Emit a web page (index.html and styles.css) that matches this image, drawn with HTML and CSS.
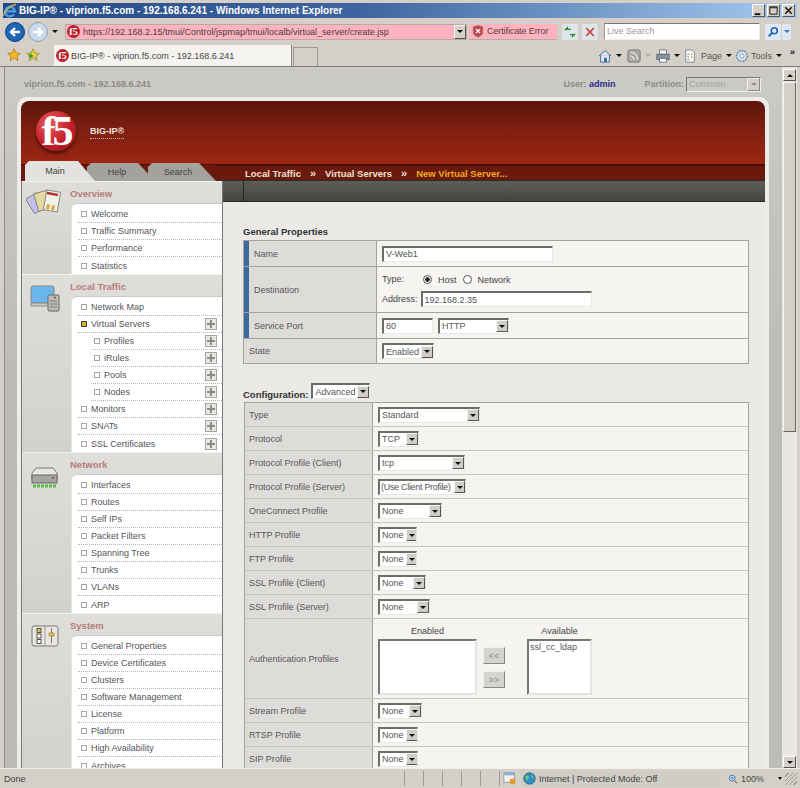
FILE: index.html
```html
<!DOCTYPE html>
<html>
  <head>
    <meta charset="utf-8" />
    <title>BIG-IP - viprion.f5.com</title>
    <link rel="stylesheet" href="styles.css">
  </head>
  <body>
    <div class="titlebar">
      <svg class="ie-logo" viewBox="0 0 16 16"><path d="M4 9h9.500A5.500 5.500 0 1 0 12.500 12.500" fill="none" stroke="#4f9fe8" stroke-width="2.600"/><path d="M1 14C0 10 8 2 15 1" fill="none" stroke="#e8c43a" stroke-width="1.200"/></svg>
      <span class="title-text">BIG-IP® - viprion.f5.com - 192.168.6.241 - Windows Internet Explorer</span>
      <div class="win-btns">
        <span class="win-btn"><svg viewBox="0 0 12 12"><rect x="2" y="9" width="6" height="2" fill="#111"/></svg></span>
        <span class="win-btn"><svg viewBox="0 0 12 12"><path d="M2 2h8v8H2zM2 3h8" fill="none" stroke="#111"/></svg></span>
        <span class="win-btn"><svg viewBox="0 0 12 12"><path d="M2.5 2.5l7 7M9.5 2.5l-7 7" stroke="#111" stroke-width="1.6"/></svg></span>
      </div>
    </div>

    <div class="addressbar">
      <svg class="nav-btn back" viewBox="0 0 20 20"><circle cx="10" cy="10" r="9.5" fill="#1f66b8" stroke="#0d3f7e"/><path d="M15 10H7M10 6l-4 4 4 4" fill="none" stroke="#fff" stroke-width="2.4"/></svg>
      <svg class="nav-btn" viewBox="0 0 20 20"><circle cx="10" cy="10" r="9.5" fill="#c9d9e8" stroke="#8ea3b8"/><path d="M5 10h8M10 6l4 4-4 4" fill="none" stroke="#fff" stroke-width="2.4"/></svg>
      <span class="mini-arrow nav-drop"></span>
      <div class="url-field">
        <span class="fav">f5</span>
        <span class="url-text">https://192.168.2.15/tmui/Control/jspmap/tmui/localb/virtual_server/create.jsp</span>
        <span class="drop-btn"><span class="mini-arrow"></span></span>
      </div>
      <div class="cert-error">
        <svg class="cert-icon" viewBox="0 0 14 16"><path d="M1 2l6-1.5 6 1.5v7c0 3-3 5-6 6-3-1-6-3-6-6z" fill="#c9414b" stroke="#8c8c8c"/><path d="M4.5 5l5 5M9.5 5l-5 5" stroke="#fff" stroke-width="1.6"/></svg>
        <span>Certificate Error</span>
      </div>
      <span class="tool-square"><svg viewBox="0 0 14 14"><path d="M1 5l3-3v2h4M13 9l-3 3v-2H7" fill="none" stroke="#1e8a2e" stroke-width="1.5"/></svg></span>
      <span class="tool-square stop"><svg viewBox="0 0 14 14"><path d="M2.5 2.5l9 9M11.5 2.5l-9 9" stroke="#c8463c" stroke-width="1.8"/></svg></span>
      <div class="search-field">Live Search</div>
      <span class="tool-square search-go"><svg viewBox="0 0 14 14"><circle cx="8.5" cy="5.5" r="3.5" fill="none" stroke="#2160b5" stroke-width="1.8"/><path d="M6 8l-4 4" stroke="#2160b5" stroke-width="2.2"/></svg></span>
      <span class="tool-square search-drop"><span class="mini-arrow blue"></span></span>
    </div>

    <div class="tabsbar">
      <svg class="fav-star" viewBox="0 0 16 16"><path d="M8 1l2.2 4.6 5 .6-3.7 3.4 1 5L8 11.2 3.5 14.600l1-5L.8 6.200l5-.6z" fill="#f2b92c" stroke="#b97e12"/></svg>
      <svg class="fav-star second" viewBox="0 0 16 16"><path d="M8 1l2.2 4.6 5 .6-3.7 3.4 1 5L8 11.2 3.5 14.600l1-5L.8 6.200l5-.6z" fill="#e7cf45" stroke="#a58d20"/><path d="M3 9h5M5.5 6.5v5" stroke="#2f9e34" stroke-width="2"/></svg>
      <div class="browser-tab">
        <span class="fav">f5</span>
        <span>BIG-IP® - viprion.f5.com - 192.168.6.241</span>
      </div>
      <div class="new-tab"></div>
      <div class="cmd-bar">
        <svg class="cmd-icon" viewBox="0 0 16 16"><path d="M1 8l7-6 7 6M3 7v8h10V7" fill="#dfe8f2" stroke="#3a5f96"/><rect x="7" y="10" width="3" height="5" fill="#2b63ad"/></svg>
        <span class="mini-arrow cmd-drop"></span>
        <svg class="cmd-icon rss" viewBox="0 0 16 16"><rect x="1" y="1" width="14" height="14" rx="2" fill="#a8a8a4" stroke="#777"/><path d="M4 12h1M4 8c2 0 4 2 4 4M4 4c5 0 8 3 8 8" fill="none" stroke="#eee" stroke-width="1.4"/></svg>
        <span class="mini-arrow cmd-drop faded"></span>
        <svg class="cmd-icon print" viewBox="0 0 16 16"><rect x="4" y="1" width="8" height="5" fill="#f2f2f2" stroke="#6c7480"/><rect x="1" y="6" width="14" height="6" fill="#8a93a0" stroke="#5a626e"/><rect x="4" y="11" width="8" height="4" fill="#fff" stroke="#6c7480"/></svg>
        <span class="mini-arrow cmd-drop tight"></span>
        <svg class="cmd-icon page-icon" viewBox="0 0 16 16"><path d="M3 1h7l3 3v11H3z" fill="#f5f5f0" stroke="#7c8490"/><path d="M5 6h2M5 9h2M5 12h2" stroke="#5f8f4e"/><path d="M9 6h2M9 9h2" stroke="#c58b36"/></svg>
        <span class="cmd-label">Page</span>
        <span class="mini-arrow cmd-drop tight"></span>
        <svg class="cmd-icon gear" viewBox="0 0 16 16"><circle cx="8" cy="8" r="6" fill="#dce6ef" stroke="#6b8fb5" stroke-width="2" stroke-dasharray="2 1"/><circle cx="8" cy="8" r="2.5" fill="#f2f2ee" stroke="#7f97b0"/></svg>
        <span class="cmd-label">Tools</span>
        <span class="mini-arrow cmd-drop"></span>
        <span class="chevrons">»</span>
      </div>
    </div>

    <div class="viewport">
      <div class="page">
        <div class="page-top">
          <span class="hostname">viprion.f5.com - 192.168.6.241</span>
          <span class="user-label">User: <b>admin</b></span>
          <span class="partition-label">Partition:</span>
          <span class="partition-select">Common<span class="drop-btn"><span class="mini-arrow grey"></span></span></span>
        </div>

        <div class="frame">
          <div class="banner">
            <div class="logo"><span>f5</span></div>
            <span class="product">BIG-IP®</span>
          </div>
          <div class="tabstrip">
            <span class="tab active">Main</span>
            <span class="tab help">Help</span>
            <span class="tab search">Search</span>
            <div class="crumbs">
              <span>Local Traffic</span><i>»</i><span>Virtual Servers</span><i>»</i><span class="current">New Virtual Server...</span>
            </div>
          </div>
          <div class="columns">
            <nav class="sidebar">
              <section class="nav-section">
                <svg class="section-icon" viewBox="0 0 38 28"><g stroke="#777" stroke-width=".8"><rect x="3" y="6" width="13" height="17" fill="#c4c0ea" transform="rotate(-32 9 14)"/><rect x="10" y="3" width="13" height="18" fill="#e6d9a0" transform="rotate(-16 16 12)"/><rect x="19" y="2" width="14" height="20" fill="#f4f2e8" transform="rotate(10 26 12)"/></g><path d="M21 4l11 2" stroke="#b5352d" stroke-width="2.4"/><path d="M21 15l3 .5-1 5-3-.5zM26 16l3 .5-1 5-3-.5z" fill="#d8a93c"/></svg>
                <h3>Overview</h3>
                <ul class="nav-list">
                  <li><span class="box"></span>Welcome</li>
                  <li><span class="box"></span>Traffic Summary</li>
                  <li><span class="box"></span>Performance</li>
                  <li><span class="box"></span>Statistics</li>
                </ul>
              </section>
              <section class="nav-section">
                <svg class="section-icon" viewBox="0 0 38 28"><rect x="2" y="1" width="23" height="17" rx="2" fill="#6bb6ec" stroke="#888"/><path d="M2 18h23v3H2z" fill="#c9c9c9" stroke="#888"/><rect x="19" y="10" width="11" height="16" rx="1" fill="#bdbdb8" stroke="#666"/><path d="M21 16h7M21 19h7M21 22h7" stroke="#777"/><circle cx="26" cy="12.5" r="1" fill="#b5352d"/></svg>
                <h3>Local Traffic</h3>
                <ul class="nav-list">
                  <li><span class="box"></span>Network Map</li>
                  <li class="on"><span class="box"></span>Virtual Servers<span class="plus"></span></li>
                  <li class="sub"><span class="box"></span>Profiles<span class="plus"></span></li>
                  <li class="sub"><span class="box"></span>iRules<span class="plus"></span></li>
                  <li class="sub"><span class="box"></span>Pools<span class="plus"></span></li>
                  <li class="sub"><span class="box"></span>Nodes<span class="plus"></span></li>
                  <li><span class="box"></span>Monitors<span class="plus"></span></li>
                  <li><span class="box"></span>SNATs<span class="plus"></span></li>
                  <li><span class="box"></span>SSL Certificates<span class="plus"></span></li>
                </ul>
              </section>
              <section class="nav-section">
                <svg class="section-icon" viewBox="0 0 38 28"><path d="M5 7l4-5h17l4 5v7H5z" fill="#e6e6e4" stroke="#777"/><rect x="5" y="9" width="25" height="8" fill="#a5a5a2" stroke="#666"/><circle cx="26" cy="12" r="1" fill="#b5352d"/><path d="M6 20h24" stroke="#5dbb47" stroke-width="3" stroke-dasharray="3 1"/></svg>
                <h3>Network</h3>
                <ul class="nav-list">
                  <li><span class="box"></span>Interfaces</li>
                  <li><span class="box"></span>Routes</li>
                  <li><span class="box"></span>Self IPs</li>
                  <li><span class="box"></span>Packet Filters</li>
                  <li><span class="box"></span>Spanning Tree</li>
                  <li><span class="box"></span>Trunks</li>
                  <li><span class="box"></span>VLANs</li>
                  <li><span class="box"></span>ARP</li>
                </ul>
              </section>
              <section class="nav-section">
                <svg class="section-icon" viewBox="0 0 38 28"><rect x="5" y="2" width="26" height="20" rx="2" fill="#e8e6df" stroke="#777"/><path d="M18 2v20" stroke="#999"/><rect x="10" y="4.5" width="4" height="4" fill="#e2c548" stroke="#555"/><rect x="10" y="10" width="4" height="4" fill="#fff" stroke="#555"/><rect x="10" y="15.5" width="4" height="4" fill="#fff" stroke="#555"/><path d="M24.5 4v15" stroke="#777"/><rect x="22" y="9" width="5" height="3" fill="#e2c548" stroke="#8a7a20" stroke-width=".6"/></svg>
                <h3>System</h3>
                <ul class="nav-list">
                  <li><span class="box"></span>General Properties</li>
                  <li><span class="box"></span>Device Certificates</li>
                  <li><span class="box"></span>Clusters</li>
                  <li><span class="box"></span>Software Management</li>
                  <li><span class="box"></span>License</li>
                  <li><span class="box"></span>Platform</li>
                  <li><span class="box"></span>High Availability</li>
                  <li><span class="box"></span>Archives</li>
                </ul>
              </section>
            </nav>

            <main class="content">
              <div class="toolstrip"><span class="toolstrip-cell"></span></div>
              <div class="form-area">
                <h4 class="form-title">General Properties</h4>
                <div class="form-table general">
                  <div class="row req h26">
                    <div class="label">Name</div>
                    <div class="value"><span class="input w-name">V-Web1</span></div>
                  </div>
                  <div class="row req h46">
                    <div class="label">Destination</div>
                    <div class="value stack">
                      <div class="type-line">
                        <span class="type-word">Type:</span>
                        <span class="radio checked"></span><span class="radio-text">Host</span>
                        <span class="radio"></span><span class="radio-text">Network</span>
                      </div>
                      <div class="address-line">
                        <span>Address:</span><span class="input w-address">192.168.2.35</span>
                      </div>
                    </div>
                  </div>
                  <div class="row req h26">
                    <div class="label">Service Port</div>
                    <div class="value">
                      <span class="input w-port">80</span>
                      <span class="select w-http">HTTP<span class="drop-btn"><span class="mini-arrow"></span></span></span>
                    </div>
                  </div>
                  <div class="row h25">
                    <div class="label">State</div>
                    <div class="value"><span class="select w-state">Enabled<span class="drop-btn"><span class="mini-arrow"></span></span></span></div>
                  </div>
                </div>

                <div class="config-head">
                  <h4 class="form-title">Configuration:</h4>
                  <span class="select w-advanced">Advanced<span class="drop-btn"><span class="mini-arrow"></span></span></span>
                </div>
                <div class="form-table config">
                  <div class="row"><div class="label">Type</div><div class="value"><span class="select w-type">Standard<span class="drop-btn"><span class="mini-arrow"></span></span></span></div></div>
                  <div class="row"><div class="label">Protocol</div><div class="value"><span class="select w-tcp">TCP<span class="drop-btn"><span class="mini-arrow"></span></span></span></div></div>
                  <div class="row"><div class="label">Protocol Profile (Client)</div><div class="value"><span class="select w-client">tcp<span class="drop-btn"><span class="mini-arrow"></span></span></span></div></div>
                  <div class="row"><div class="label">Protocol Profile (Server)</div><div class="value"><span class="select w-server">(Use Client Profile)<span class="drop-btn"><span class="mini-arrow"></span></span></span></div></div>
                  <div class="row"><div class="label">OneConnect Profile</div><div class="value"><span class="select w-one">None<span class="drop-btn"><span class="mini-arrow"></span></span></span></div></div>
                  <div class="row"><div class="label">HTTP Profile</div><div class="value"><span class="select w-39">None<span class="drop-btn"><span class="mini-arrow"></span></span></span></div></div>
                  <div class="row"><div class="label">FTP Profile</div><div class="value"><span class="select w-39">None<span class="drop-btn"><span class="mini-arrow"></span></span></span></div></div>
                  <div class="row"><div class="label">SSL Profile (Client)</div><div class="value"><span class="select w-48">None<span class="drop-btn"><span class="mini-arrow"></span></span></span></div></div>
                  <div class="row"><div class="label">SSL Profile (Server)</div><div class="value"><span class="select w-52">None<span class="drop-btn"><span class="mini-arrow"></span></span></span></div></div>
                  <div class="row auth">
                    <div class="label">Authentication Profiles</div>
                    <div class="value picker">
                      <div class="pick-col">
                        <span class="pick-title">Enabled</span>
                        <div class="listbox w-enabled"></div>
                      </div>
                      <div class="pick-btns"><span class="move">&lt;&lt;</span><span class="move">&gt;&gt;</span></div>
                      <div class="pick-col">
                        <span class="pick-title">Available</span>
                        <div class="listbox w-available">ssl_cc_ldap</div>
                      </div>
                    </div>
                  </div>
                  <div class="row"><div class="label">Stream Profile</div><div class="value"><span class="select w-44">None<span class="drop-btn"><span class="mini-arrow"></span></span></span></div></div>
                  <div class="row"><div class="label">RTSP Profile</div><div class="value"><span class="select w-40">None<span class="drop-btn"><span class="mini-arrow"></span></span></span></div></div>
                  <div class="row"><div class="label">SIP Profile</div><div class="value"><span class="select w-40">None<span class="drop-btn"><span class="mini-arrow"></span></span></span></div></div>
                </div>
              </div>
            </main>
          </div>
        </div>
      </div>

      <div class="scrollbar">
        <span class="scroll-btn"><span class="mini-arrow up"></span></span>
        <span class="scroll-thumb"></span>
        <span class="scroll-track"></span>
        <span class="scroll-btn"><span class="mini-arrow"></span></span>
      </div>
    </div>

    <div class="statusbar">
      <span class="status-text">Done</span>
      <span class="status-cell"></span>
      <span class="status-cell"></span>
      <span class="status-cell"></span>
      <span class="status-cell"></span>
      <span class="status-cell"></span>
      <span class="status-cell lock">
        <svg viewBox="0 0 16 16"><rect x="1" y="2" width="12" height="11" fill="#f3f3ee" stroke="#8a97a8"/><rect x="1" y="2" width="12" height="3" fill="#8fb2dc"/><circle cx="11" cy="12" r="3.5" fill="#e39a2c"/></svg>
      </span>
      <span class="status-zone">
        <svg viewBox="0 0 16 16"><circle cx="8" cy="8" r="7" fill="#2f8fc4" stroke="#1d5f8e"/><path d="M3 5c3-2 5 0 4 3-1 2-3 1-3 4M10 3c2 1 3 3 3 5-2 0-3-2-3-5z" fill="#7cc36a"/></svg>
        Internet | Protected Mode: Off
      </span>
      <span class="status-zoom">
        <svg viewBox="0 0 12 12"><circle cx="5" cy="5" r="3.5" fill="#dfeaf6" stroke="#3f76b8" stroke-width="1.2"/><path d="M3.2 5h3.6M5 3.2v3.6" stroke="#2160b5"/><path d="M8 8l3 3" stroke="#9b7c3c" stroke-width="1.6"/></svg>
        100%
        <span class="mini-arrow"></span>
      </span>
      <span class="grip"></span>
    </div>
  </body>
</html>
```

FILE: styles.css
```css
* {
  box-sizing: border-box;
}

html,
body {
  margin: 0;
  height: 100%;
}

body {
  display: flex;
  flex-direction: column;
  width: 800px;
  height: 788px;
  overflow: hidden;
  padding-top: 3px;
  background: #d4d0c8;
  font-family: "Liberation Sans", Arial, sans-serif;
  font-size: 9px;
  color: #444;
}

ul {
  list-style: none;
  margin: 0;
  padding: 0;
}

h3,
h4 {
  margin: 0;
}

svg {
  display: block;
  flex: none;
}

.mini-arrow {
  display: inline-block;
  flex: none;
  width: 0;
  height: 0;
  border-left: 3px solid transparent;
  border-right: 3px solid transparent;
  border-top: 3px solid #111;
}

.mini-arrow.up {
  border-top: 0;
  border-bottom: 3px solid #111;
}

.mini-arrow.blue {
  border-top-color: #3f76b8;
}

.mini-arrow.grey {
  border-top-color: #888;
}

/* browser chrome */
.titlebar {
  display: flex;
  align-items: center;
  height: 15px;
  margin: 0 3px;
  background: linear-gradient(90deg, #234a86 0%, #3e659f 45%, #a6caf0 100%);
}

.ie-logo {
  width: 14px;
  height: 15px;
  margin-right: 2px;
}

.title-text {
  font-size: 10px;
  font-weight: 700;
  color: #fff;
}

.win-btns {
  display: flex;
  gap: 2px;
  margin-left: auto;
  margin-right: 2px;
}

.win-btn {
  width: 13px;
  height: 13px;
  background: #d4d0c8;
  border: 1px solid;
  border-color: #fff #555 #555 #fff;
}

.addressbar {
  display: flex;
  align-items: center;
  height: 27px;
  padding-left: 5px;
}

.nav-btn {
  width: 20px;
  height: 20px;
}

.nav-btn.back {
  margin-right: 3px;
}

.nav-drop {
  margin: 0 7px 0 4px;
}

.url-field {
  display: flex;
  align-items: center;
  width: 402px;
  height: 16px;
  background: #ffb3bf;
  border: 1px solid #b8a8a8;
  padding-left: 1px;
}

.fav {
  display: flex;
  align-items: center;
  justify-content: center;
  flex: none;
  width: 13px;
  height: 13px;
  border-radius: 50%;
  background: #b9202a;
  color: #fff;
  font-family: "Liberation Serif", serif;
  font-size: 10px;
  font-weight: 700;
  line-height: 1;
}

.url-text {
  flex: 1;
  margin-left: 3px;
  color: #4a3a3e;
  white-space: nowrap;
  overflow: hidden;
}

.drop-btn {
  display: flex;
  align-items: center;
  justify-content: center;
  flex: none;
  width: 12px;
  height: 100%;
  background: #d4d0c8;
  border: 1px solid;
  border-color: #f5f5f5 #555 #555 #f5f5f5;
}

.cert-error {
  display: flex;
  align-items: center;
  width: 88px;
  height: 16px;
  margin-left: 2px;
  padding-left: 3px;
  background: #ffb3bf;
  border-bottom: 1px solid #b8a8a8;
  letter-spacing: -0.1px;
  color: #5a3d42;
  white-space: nowrap;
}

.cert-icon {
  width: 12px;
  height: 13px;
  margin-right: 3px;
}

.tool-square {
  display: flex;
  align-items: center;
  justify-content: center;
  flex: none;
  width: 16px;
  height: 16px;
  margin-left: 5px;
  background: #dfe5ea;
  border-radius: 2px;
}

.tool-square.stop {
  margin-left: 4px;
}

.tool-square svg {
  width: 12px;
  height: 12px;
}

.search-field {
  width: 156px;
  height: 17px;
  margin-left: 6px;
  padding-left: 2px;
  background: #fff;
  border: 1px solid;
  border-color: #777 #eee #eee #999;
  line-height: 15px;
  color: #999;
}

.search-go {
  background: #dde8f5;
}

.search-drop {
  width: 9px;
  margin-left: 1px;
  background: #dde8f5;
}

.tabsbar {
  display: flex;
  align-items: flex-end;
  height: 22px;
  padding-left: 7px;
  border-bottom: 1px solid #7d7d7a;
}

.fav-star {
  width: 14px;
  height: 14px;
  margin-bottom: 4px;
}

.fav-star.second {
  margin-left: 5px;
  margin-right: 14px;
}

.browser-tab {
  display: flex;
  align-items: center;
  gap: 2px;
  width: 238px;
  height: 21px;
  padding-left: 2px;
  background: #f4f3ef;
  border-right: 1px solid #888;
  color: #444;
  white-space: nowrap;
}

.new-tab {
  width: 25px;
  height: 19px;
  margin-left: 1px;
  background: #d4d0c8;
  border: 1px solid #9a9a96;
  border-bottom: 0;
}

.cmd-bar {
  display: flex;
  align-items: center;
  height: 21px;
  margin-left: auto;
  padding-right: 5px;
  color: #555;
}

.cmd-icon {
  width: 14px;
  height: 14px;
}

.cmd-drop {
  margin: 0 5px 0 4px;
}

.cmd-drop.tight {
  margin-right: 3px;
}

.cmd-drop.faded {
  border-top-color: #aaa;
}

.cmd-icon.page-icon {
  margin-right: 4px;
}

.cmd-icon.gear {
  margin-right: 2px;
}

.chevrons {
  margin: -8px 0 0 3px;
  font-weight: 700;
  color: #111;
}

/* page */
.viewport {
  display: flex;
  flex: 1;
  min-height: 0;
  padding-left: 4px;
  padding-right: 3px;
}

.page {
  flex: 1;
  min-width: 0;
  overflow: hidden;
  background: linear-gradient(180deg, #cbcac5 0, #bdbcb7 300px);
  border-left: 1px solid #8a8a86;
  padding-left: 12px;
}

.page-top {
  display: flex;
  align-items: center;
  height: 30px;
  padding: 4px 21px 0 7px;
  color: #8b8b87;
  font-weight: 700;
}

.hostname {
  margin-right: auto;
}

.user-label b {
  color: #2b2b8a;
}

.partition-label {
  margin-left: 29px;
}

.partition-select {
  display: flex;
  align-items: center;
  justify-content: space-between;
  width: 75px;
  height: 15px;
  margin-left: 2px;
  padding-left: 2px;
  border: 1px solid;
  border-color: #777 #eee #eee #777;
  color: #a5a5a0;
  font-weight: 400;
}

.partition-select .drop-btn {
  border-color: #eee #888 #888 #eee;
  width: 13px;
}

.frame {
  width: 752px;
  height: 700px;
  padding: 4px 4px 0 4px;
  background: #eeede9;
  border-radius: 10px 10px 0 0;
}

.banner {
  display: flex;
  align-items: center;
  height: 64px;
  padding-left: 15px;
  border-radius: 8px 8px 0 0;
  background: linear-gradient(180deg, #5e150b 0%, #7a1e10 40%, #9d2614 100%);
  border-bottom: 1px solid #4a1008;
}

.logo {
  display: flex;
  align-items: center;
  justify-content: center;
  flex: none;
  width: 40px;
  height: 40px;
  margin-top: -4px;
  border-radius: 50%;
  background: radial-gradient(circle at 35% 30%, #e9585c 0%, #c4202a 55%, #8a1018 100%);
  box-shadow: 0 3px 3px rgba(0, 0, 0, 0.45);
}

.logo span {
  font-family: "Liberation Serif", serif;
  font-size: 42px;
  font-weight: 700;
  line-height: 40px;
  letter-spacing: -3px;
  color: #fff;
}

.product {
  margin-left: 14px;
  padding-bottom: 2px;
  border-bottom: 1px dotted #d8b9a8;
  color: #f0e2da;
  font-weight: 700;
}

.tabstrip {
  display: flex;
  align-items: flex-end;
  height: 16px;
  padding-left: 4px;
  background: #6a1a0c;
}

.tab {
  display: flex;
  align-items: center;
  justify-content: center;
  flex: none;
  width: 68px;
  height: 18px;
  padding-right: 8px;
  background: #a3a29c;
  color: #444;
  clip-path: polygon(0 4px, 4px 0, calc(100% - 17px) 0, 100% 100%, 0 100%);
}

.tab.active {
  width: 70px;
  height: 20px;
  padding-right: 10px;
  background: #e3e2de;
  z-index: 1;
}

.tab.help {
  margin-left: -8px;
}

.tab.search {
  margin-left: -7px;
}

.crumbs {
  display: flex;
  align-items: center;
  flex: 1;
  height: 16px;
  padding-left: 29px;
  border-top: 1px solid #3f0d06;
  border-bottom: 1px solid #2a2a28;
  color: #eee0d2;
  font-size: 9.5px;
  font-weight: 700;
}

.crumbs i {
  margin: 0 9px;
  font-size: 11px;
  font-style: normal;
}

.crumbs .current {
  color: #f0a81f;
}

.columns {
  display: flex;
  align-items: flex-start;
}

/* left nav */
.sidebar {
  flex: none;
  width: 202px;
  border-left: 1px solid #777;
  border-right: 1px solid #777;
  background: #e3e2de;
}

.nav-section {
  position: relative;
  background: linear-gradient(180deg, #dfdeda 0%, #d2d1cc 100%);
}

.nav-section h3 {
  height: 22px;
  padding-left: 48px;
  box-shadow: inset 0 1px #f2f1ee;
  color: #b87c7c;
  font-size: 9.5px;
  font-weight: 700;
  line-height: 25px;
}

.section-icon {
  position: absolute;
  left: 5px;
  top: 11px;
  width: 38px;
  height: 28px;
}

.nav-section:nth-child(1) .section-icon {
  left: 4px;
  top: 8px;
}

.nav-section:nth-child(2) .section-icon {
  left: 7px;
}

.nav-section:nth-child(3) .section-icon {
  top: 14px;
}

.nav-list {
  margin-left: 49px;
  padding-top: 2px;
  background: #fff;
  border-top: 1px solid #c9c9c5;
  border-left: 1px solid #e5e5e2;
  border-top-left-radius: 6px;
}

.nav-list li {
  display: flex;
  align-items: center;
  height: 17px;
  margin-left: 6px;
  padding-left: 3px;
  border-bottom: 1px dotted #b5b5b2;
  color: #55555a;
}

.nav-list li:last-child {
  border-bottom: 0;
}

.nav-list li.sub {
  margin-left: 19px;
}

.box {
  flex: none;
  width: 6px;
  height: 6px;
  margin-right: 4px;
  border: 1px solid #a5a5a2;
  background: #fff;
}

.on .box {
  background: #d6b629;
  border-color: #444;
}

.plus {
  position: relative;
  width: 12px;
  height: 12px;
  margin-left: auto;
  margin-right: 5px;
  background: #e8e7e3;
  border: 1px solid #a5a5a1;
}

.plus::before,
.plus::after {
  content: "";
  position: absolute;
  background: #8a8a86;
}

.plus::before {
  left: 1px;
  right: 1px;
  top: 4px;
  height: 2px;
}

.plus::after {
  top: 1px;
  bottom: 1px;
  left: 4px;
  width: 2px;
}

/* main content */
.content {
  flex: 1;
  min-width: 0;
}

.toolstrip {
  height: 21px;
  background: linear-gradient(180deg, #5e5d58 0%, #454441 100%);
  border-bottom: 1px solid #2a2a28;
}

.toolstrip-cell {
  display: block;
  width: 21px;
  height: 100%;
  border-right: 1px solid #222;
}

.form-area {
  height: 600px;
  padding: 23px 16px 0 20px;
  background: #eae9e6;
}

.form-title {
  height: 15px;
  color: #333;
  font-size: 9.5px;
  font-weight: 700;
  line-height: 13px;
}

.form-table {
  background: #f5f4f1;
  border: 1px solid #a3a29e;
  border-bottom: 0;
}

.row {
  display: flex;
  height: 24px;
  border-bottom: 1px solid #c6c5c0;
}

.general .row {
  border-bottom-color: #a3a29e;
}

.h26 {
  height: 26px;
}

.h46 {
  height: 46px;
}

.h25 {
  height: 25px;
}

.label {
  display: flex;
  align-items: center;
  flex: none;
  width: 133px;
  padding-left: 5px;
  background: #dddcd8;
  border-right: 1px solid #a3a29e;
  color: #55555a;
}

.req .label {
  padding-left: 5px;
  border-left: 5px solid #3b6a9e;
}

.config {
  margin-left: 1px;
}

.config .label {
  width: 128px;
  padding-left: 4px;
}

.value {
  display: flex;
  align-items: center;
  gap: 5px;
  flex: 1;
  padding-left: 5px;
  min-width: 0;
}

.input,
.select {
  display: flex;
  align-items: center;
  flex: none;
  height: 16px;
  padding-left: 2px;
  background: #fff;
  border: 1px solid;
  border-width: 2px 1px 1px 2px;
  border-color: #6c6c68 #e8e8e5 #e8e8e5 #6c6c68;
  color: #55555a;
  white-space: nowrap;
}

.select {
  justify-content: space-between;
  overflow: hidden;
}

.select .drop-btn {
  width: 12px;
  height: 12px;
  margin-left: 2px;
  background: #cfcdc5;
}

.w-name {
  width: 171px;
}

.w-address {
  width: 171px;
}

.w-port {
  width: 51px;
}

.w-http {
  width: 71px;
}

.w-state {
  width: 52px;
}

.w-advanced {
  width: 59px;
}

.w-type {
  width: 102px;
}

.w-tcp {
  width: 41px;
}

.w-client {
  width: 87px;
}

.w-server {
  width: 88px;
  padding-left: 1px;
  letter-spacing: -0.3px;
}

.w-server .drop-btn {
  width: 11px;
  margin-left: 0;
}

.w-one {
  width: 64px;
}

.w-39 {
  width: 39px;
}

.w-40 {
  width: 40px;
}

.w-44 {
  width: 44px;
}

.w-48 {
  width: 48px;
}

.w-52 {
  width: 52px;
}

.stack {
  flex-direction: column;
  align-items: flex-start;
  gap: 5px;
  justify-content: center;
}

.type-line {
  display: flex;
  align-items: center;
  height: 14px;
}

.type-word {
  width: 41px;
}

.radio {
  flex: none;
  width: 9px;
  height: 9px;
  border-radius: 50%;
  background: #fff;
  border: 1px solid #555;
}

.radio.checked {
  background: radial-gradient(circle, #222 0 2px, #fff 2.5px);
}

.radio-text {
  margin: 1px 6px 0 6px;
}

.address-line {
  display: flex;
  align-items: center;
  gap: 3px;
}

.config-head {
  display: flex;
  align-items: flex-end;
  gap: 3px;
  height: 35px;
  margin-bottom: 3px;
}

.config-head .form-title {
  height: 13px;
  margin-bottom: -2px;
}

.row.auth {
  height: 80px;
}

.picker {
  align-items: flex-start;
  gap: 0;
  padding-top: 1px;
}

.pick-col {
  display: flex;
  flex-direction: column;
  align-items: center;
}

.pick-title {
  height: 19px;
  line-height: 23px;
}

.listbox {
  height: 56px;
  padding: 1px;
  background: #fff;
  border: 2px solid;
  border-color: #777 #e4e4e0 #e4e4e0 #777;
  color: #55555a;
}

.w-enabled {
  width: 99px;
}

.w-available {
  width: 65px;
}

.pick-btns {
  display: flex;
  flex-direction: column;
  gap: 7px;
  margin: 27px 22px 0 6px;
}

.move {
  display: flex;
  align-items: center;
  justify-content: center;
  width: 22px;
  height: 17px;
  background: #d4d3cd;
  border: 1px solid;
  border-color: #eee #888 #888 #eee;
  color: #888;
}

/* scrollbar */
.scrollbar {
  display: flex;
  flex-direction: column;
  flex: none;
  width: 15px;
  padding: 2px 1px 0;
  background: #e8e7e3;
}

.scroll-btn {
  display: flex;
  align-items: center;
  justify-content: center;
  flex: none;
  height: 12px;
  background: #d4d0c8;
  border: 1px solid;
  border-color: #fff #555 #555 #fff;
}

.scroll-thumb {
  flex: none;
  height: 350px;
  margin-top: 1px;
  background: #d4d0c8;
  border: 1px solid;
  border-color: #f5f5f5 #666 #666 #f5f5f5;
}

.scroll-track {
  flex: 1;
}

/* status bar */
.statusbar {
  display: flex;
  align-items: center;
  flex: none;
  height: 20px;
  border-top: 1px solid #f0efeb;
  color: #444;
}

.status-text {
  flex: none;
  width: 404px;
  padding-left: 4px;
}

.status-cell {
  flex: none;
  width: 19px;
  height: 15px;
  border-left: 1px solid #9a9a96;
}

.status-cell.lock {
  width: 22px;
  padding-left: 3px;
}

.status-cell.lock svg {
  width: 14px;
  height: 14px;
}

.status-zone {
  display: flex;
  align-items: center;
  gap: 3px;
  width: 200px;
  height: 16px;
  padding-left: 2px;
  background: #cfcdc6;
  white-space: nowrap;
}

.status-zone svg {
  width: 13px;
  height: 13px;
}

.status-zoom {
  display: flex;
  align-items: center;
  gap: 3px;
  margin-left: 7px;
  white-space: nowrap;
}

.status-zoom svg {
  width: 10px;
  height: 10px;
}

.status-zoom .mini-arrow {
  margin-left: 11px;
  border-left-width: 2px;
  border-right-width: 2px;
}

.grip {
  width: 12px;
  height: 12px;
  margin-left: auto;
  margin-right: 3px;
  background: repeating-linear-gradient(135deg, #d4d0c8 0 2px, #9a9a96 2px 3px);
}
```
